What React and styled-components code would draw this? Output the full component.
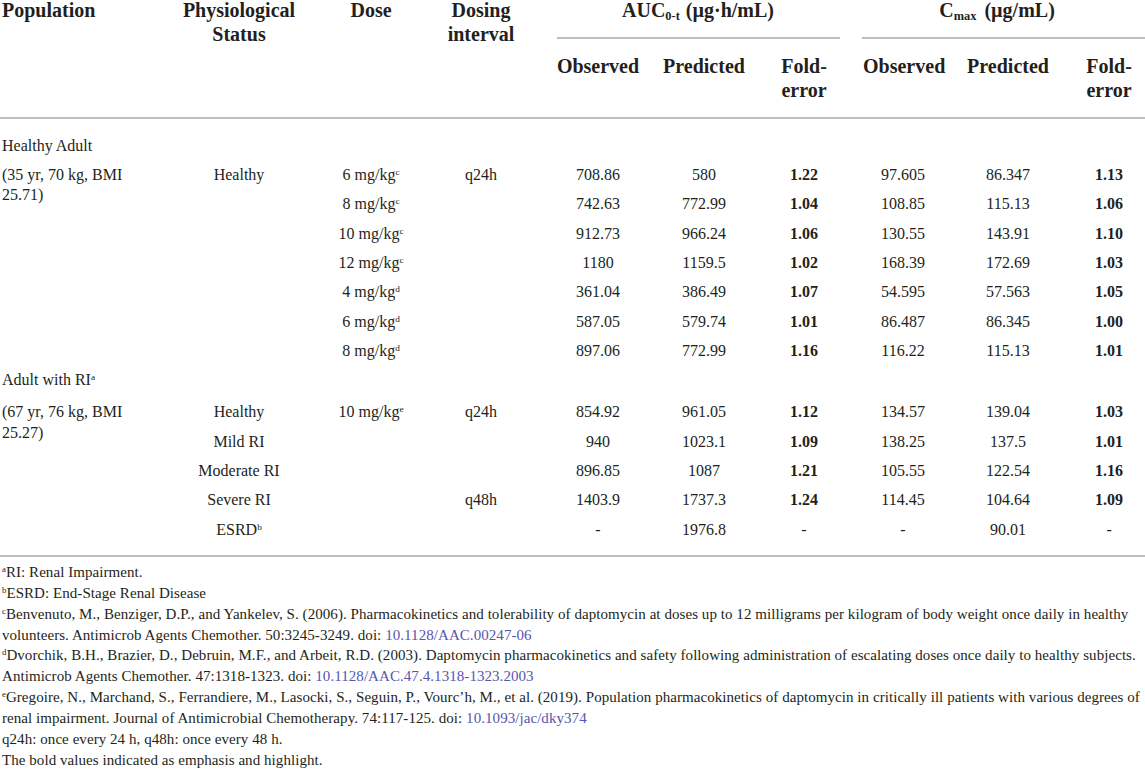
import React from "react";
import styled, { createGlobalStyle, css } from "styled-components";

const GlobalStyle = createGlobalStyle`
  html, body { margin: 0; padding: 0; background: #ffffff; }
  body {
    font-family: "Liberation Serif", "Times New Roman", serif;
    color: #231f20;
  }
`;

const Page = styled.div`
  width: 1145px;
  overflow: hidden;
`;

const Table = styled.table`
  width: 1145px;
  table-layout: fixed;
  border-collapse: separate;
  border-spacing: 0;
  border-bottom: 2px solid #bdbdbd;
`;

const Th = styled.th`
  font-size: 20px;
  font-weight: 700;
  line-height: 20px;
  vertical-align: top;
  white-space: nowrap;
  padding: 0;
  text-align: ${(p) => p.$align || "center"};
  ${(p) => p.$sub && css`padding: 17.25px 0 17px;`}
  ${(p) => p.$rule && css`border-bottom: 2px solid #bdbdbd;`}
  ${(p) => p.$pl && css`padding-left: ${p.$pl}px;`}
`;

const HeadLine = styled.span`
  display: block;
  & + & { margin-top: 4px; }
`;

const GroupLabel = styled.div`
  padding-bottom: 17px;
  padding-right: ${(p) => p.$shift || 0}px;
`;

const GroupRule = styled.div`
  border-top: 2px solid #bdbdbd;
  margin: 0 ${(p) => p.$right || 0}px 0 ${(p) => p.$left || 0}px;
`;

const Sub = styled.sub`
  font-size: 0.62em;
  vertical-align: -0.28em;
  line-height: 0;
  margin-right: ${(p) => p.$gap || 0}px;
`;

const Sup = styled.sup`
  font-size: 0.58em;
  vertical-align: 0.55em;
  line-height: 0;
`;

const BodyRow = styled.tr`
  ${(p) => p.$first && css`& > td { padding-top: 16.5px; }`}
  ${(p) => p.$lead && css`& > td { padding-top: 7px; }`}
  ${(p) => p.$last && css`& > td { padding-bottom: 15.5px; }`}
`;

const Td = styled.td`
  font-size: 16px;
  line-height: 20.33px;
  padding: 4.5px 0;
  vertical-align: top;
  text-align: ${(p) => p.$align || "center"};
  font-weight: ${(p) => (p.$bold ? 700 : 400)};
  ${(p) => p.$pl != null && css`padding-left: ${p.$pl}px;`}
  ${(p) => p.$pr != null && css`padding-right: ${p.$pr}px;`}
`;

const Notes = styled.div`
  padding: 4.5px 0 0 2px;
  font-size: 15px;
  letter-spacing: 0.06px;
  line-height: 20.9px;
  white-space: nowrap;
`;

const Note = styled.div``;

const Doi = styled.a`
  color: #5656ad;
  text-decoration: none;
`;

const widths = [165, 148, 116, 104, 130, 82, 118, 80, 130, 72];

const group1 = [
  ["Healthy", ["6 mg/kg", "c"], "q24h", "708.86", "580", "1.22", "97.605", "86.347", "1.13"],
  ["", ["8 mg/kg", "c"], "", "742.63", "772.99", "1.04", "108.85", "115.13", "1.06"],
  ["", ["10 mg/kg", "c"], "", "912.73", "966.24", "1.06", "130.55", "143.91", "1.10"],
  ["", ["12 mg/kg", "c"], "", "1180", "1159.5", "1.02", "168.39", "172.69", "1.03"],
  ["", ["4 mg/kg", "d"], "", "361.04", "386.49", "1.07", "54.595", "57.563", "1.05"],
  ["", ["6 mg/kg", "d"], "", "587.05", "579.74", "1.01", "86.487", "86.345", "1.00"],
  ["", ["8 mg/kg", "d"], "", "897.06", "772.99", "1.16", "116.22", "115.13", "1.01"],
];

const group2 = [
  [["Healthy"], ["10 mg/kg", "e"], "q24h", "854.92", "961.05", "1.12", "134.57", "139.04", "1.03"],
  [["Mild RI"], null, "", "940", "1023.1", "1.09", "138.25", "137.5", "1.01"],
  [["Moderate RI"], null, "", "896.85", "1087", "1.21", "105.55", "122.54", "1.16"],
  [["Severe RI"], null, "q48h", "1403.9", "1737.3", "1.24", "114.45", "104.64", "1.09"],
  [["ESRD", "b"], null, "", "-", "1976.8", "-", "-", "90.01", "-"],
];

const WithSup = ({ v }) => {
  if (!v) return null;
  if (typeof v === "string") return v;
  return (
    <>
      {v[0]}
      {v[1] && <Sup>{v[1]}</Sup>}
    </>
  );
};

const DataCells = ({ row }) => (
  <>
    <Td>
      <WithSup v={row[0]} />
    </Td>
    <Td>
      <WithSup v={row[1]} />
    </Td>
    <Td>{row[2]}</Td>
    <Td>{row[3]}</Td>
    <Td>{row[4]}</Td>
    <Td $bold={row[5] !== "-"}>{row[5]}</Td>
    <Td>{row[6]}</Td>
    <Td>{row[7]}</Td>
    <Td $bold={row[8] !== "-"}>{row[8]}</Td>
  </>
);

export default function App() {
  return (
    <Page>
      <GlobalStyle />
      <Table>
        <colgroup>
          {widths.map((w, i) => (
            <col key={i} style={{ width: w }} />
          ))}
        </colgroup>
        <thead>
          <tr>
            <Th rowSpan={2} $align="left" $pl={2} $rule>
              <HeadLine>Population</HeadLine>
            </Th>
            <Th rowSpan={2} $rule>
              <HeadLine>Physiological</HeadLine>
              <HeadLine>Status</HeadLine>
            </Th>
            <Th rowSpan={2} $rule>
              <HeadLine>Dose</HeadLine>
            </Th>
            <Th rowSpan={2} $rule>
              <HeadLine>Dosing</HeadLine>
              <HeadLine>interval</HeadLine>
            </Th>
            <Th colSpan={3}>
              <GroupLabel>
                AUC<Sub $gap={6}>0-t</Sub>(µg·h/mL)
              </GroupLabel>
              <GroupRule $left={24} $right={23} />
            </Th>
            <Th colSpan={3}>
              <GroupLabel $shift={14}>
                C<Sub $gap={8}>max</Sub>(µg/mL)
              </GroupLabel>
              <GroupRule $left={-1} />
            </Th>
          </tr>
          <tr>
            <Th $sub $rule>
              <HeadLine>Observed</HeadLine>
            </Th>
            <Th $sub $rule>
              <HeadLine>Predicted</HeadLine>
            </Th>
            <Th $sub $rule>
              <HeadLine>Fold-</HeadLine>
              <HeadLine>error</HeadLine>
            </Th>
            <Th $sub $rule>
              <HeadLine>Observed</HeadLine>
            </Th>
            <Th $sub $rule>
              <HeadLine>Predicted</HeadLine>
            </Th>
            <Th $sub $rule>
              <HeadLine>Fold-</HeadLine>
              <HeadLine>error</HeadLine>
            </Th>
          </tr>
        </thead>
        <tbody>
          <BodyRow $first>
            <Td colSpan={10} $align="left" $pl={2}>
              Healthy Adult
            </Td>
          </BodyRow>
          {group1.map((row, i) => (
            <BodyRow key={`g1-${i}`}>
              {i === 0 && (
                <Td rowSpan={group1.length} $align="left" $pl={2} $pr={24}>
                  (35 yr, 70 kg, BMI 25.71)
                </Td>
              )}
              <DataCells row={row} />
            </BodyRow>
          ))}
          <BodyRow>
            <Td colSpan={10} $align="left" $pl={2}>
              Adult with RI<Sup>a</Sup>
            </Td>
          </BodyRow>
          {group2.map((row, i) => (
            <BodyRow key={`g2-${i}`} $lead={i === 0} $last={i === group2.length - 1}>
              {i === 0 && (
                <Td rowSpan={group2.length} $align="left" $pl={2} $pr={24}>
                  (67 yr, 76 kg, BMI 25.27)
                </Td>
              )}
              <DataCells row={row} />
            </BodyRow>
          ))}
        </tbody>
      </Table>
      <Notes>
        <Note>
          <Sup>a</Sup>RI: Renal Impairment.
        </Note>
        <Note>
          <Sup>b</Sup>ESRD: End-Stage Renal Disease
        </Note>
        <Note>
          <Sup>c</Sup>Benvenuto, M., Benziger, D.P., and Yankelev, S. (2006). Pharmacokinetics and tolerability of daptomycin at doses up to 12 milligrams per kilogram of body weight once daily in healthy
          <br />
          volunteers. Antimicrob Agents Chemother. 50:3245-3249. doi:{" "}
          <Doi href="https://doi.org/10.1128/AAC.00247-06">10.1128/AAC.00247-06</Doi>
        </Note>
        <Note>
          <Sup>d</Sup>Dvorchik, B.H., Brazier, D., Debruin, M.F., and Arbeit, R.D. (2003). Daptomycin pharmacokinetics and safety following administration of escalating doses once daily to healthy subjects.
          <br />
          Antimicrob Agents Chemother. 47:1318-1323. doi:{" "}
          <Doi href="https://doi.org/10.1128/AAC.47.4.1318-1323.2003">10.1128/AAC.47.4.1318-1323.2003</Doi>
        </Note>
        <Note>
          <Sup>e</Sup>Gregoire, N., Marchand, S., Ferrandiere, M., Lasocki, S., Seguin, P., Vourc’h, M., et al. (2019). Population pharmacokinetics of daptomycin in critically ill patients with various degrees of
          <br />
          renal impairment. Journal of Antimicrobial Chemotherapy. 74:117-125. doi:{" "}
          <Doi href="https://doi.org/10.1093/jac/dky374">10.1093/jac/dky374</Doi>
        </Note>
        <Note>q24h: once every 24 h, q48h: once every 48 h.</Note>
        <Note>The bold values indicated as emphasis and highlight.</Note>
      </Notes>
    </Page>
  );
}
